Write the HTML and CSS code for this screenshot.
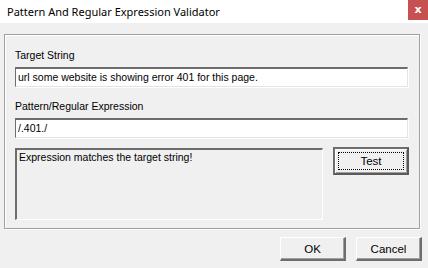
FILE: index.html
```html
<!DOCTYPE html>
<html lang="en">
  <head>
    <meta charset="UTF-8" />
    <title>Pattern And Regular Expression Validator</title>
    <link rel="stylesheet" href="styles.css">
  </head>
  <body>
    <!-- Ventana de diálogo -->
    <div class="window">
      <div class="titlebar">
        <span class="title">Pattern And Regular Expression Validator</span>
        <span class="close">x</span>
      </div>

      <div class="client">
        <div class="group">
          <label class="label" for="target">Target String</label>
          <div class="field">url some website is showing error 401 for this page.</div>

          <label class="label" for="pattern">Pattern/Regular Expression</label>
          <div class="field">/.401./</div>

          <div class="result-row">
            <div class="result">Expression matches the target string!</div>
            <button class="btn btn-default"><span class="focus">Test</span></button>
          </div>
        </div>

        <div class="actions">
          <button class="btn btn-ok">OK</button>
          <button class="btn btn-cancel">Cancel</button>
        </div>
      </div>
    </div>
  </body>
</html>
```

FILE: styles.css
```css
/* Estilos de diálogo clásico */
body {
  margin: 0;
  font-family: "Liberation Sans", Arial, sans-serif;
  font-size: 10.5px;
  color: #000;
  background: #f0f0f0;
}
.window {
  width: 428px;
  height: 268px;
  display: flex;
  flex-direction: column;
}
.titlebar {
  height: 23px;
  background: #fff;
  display: flex;
  justify-content: space-between;
  align-items: flex-start;
}
.title {
  font-family: "Noto Sans", "Open Sans", sans-serif;
  font-size: 11px;
  line-height: 23px;
  padding-left: 7px;
  color: #000;
}
.close {
  width: 20px;
  height: 20px;
  background: #c75050;
  color: #fff;
  font-family: "DejaVu Sans", sans-serif;
  font-weight: bold;
  font-size: 11px;
  line-height: 19px;
  text-align: center;
}
.client {
  flex: 1;
  padding: 11px 0 0 4px;
}
.group {
  width: 416px;
  height: 195px;
  box-sizing: border-box;
  border: 1px solid #a0a0a0;
  box-shadow: 1px 1px 0 #fff, inset 1px 1px 0 #fff;
  padding: 14px 0 0 10px;
  display: flex;
  flex-direction: column;
}
.label {
  display: block;
  line-height: 13px;
  height: 13px;
  margin-bottom: 5px;
}
.field {
  width: 387px;
  height: 17px;
  background: #fff;
  border-style: solid;
  border-width: 2px 1px 1px 1px;
  border-color: #6d6d6d #e3e3e3 #e3e3e3 #6d6d6d;
  box-shadow: 1px 1px 0 #fff;
  padding: 0 2px;
  line-height: 17px;
  margin-bottom: 13px;
}
.result-row {
  display: flex;
  gap: 10px;
  align-items: flex-start;
  margin-top: -3px;
}
.result {
  width: 301px;
  height: 69px;
  border-style: solid;
  border-width: 2px 1px 1px 2px;
  border-color: #6d6d6d #fff #fff #6d6d6d;
  padding: 0 2px;
  line-height: 14px;
}
.btn {
  font-family: "Liberation Sans", Arial, sans-serif;
  font-size: 11.5px;
  background: #f0f0f0;
  color: #000;
  padding: 0;
  border-style: solid;
  border-width: 1px 2px 2px 1px;
  border-color: #fff #6d6d6d #6d6d6d #fff;
  box-shadow: inset -1px -1px 0 #a0a0a0;
}
.btn-default {
  width: 76px;
  height: 28px;
  margin-top: -1px;
  border-width: 2px;
  border-color: #6d6d6d #5a5a5a #5a5a5a #6d6d6d;
  box-shadow: inset 1px 1px 0 #fff, inset -1px -1px 0 #a0a0a0;
  display: flex;
  padding: 3px;
}
.focus {
  flex: 1;
  border: 1px dotted #000;
  display: flex;
  align-items: center;
  justify-content: center;
}
.actions {
  display: flex;
  justify-content: flex-end;
  gap: 10px;
  padding: 8px 6px 0 0;
}
.btn-ok,
.btn-cancel {
  width: 66px;
  height: 24px;
}
```
